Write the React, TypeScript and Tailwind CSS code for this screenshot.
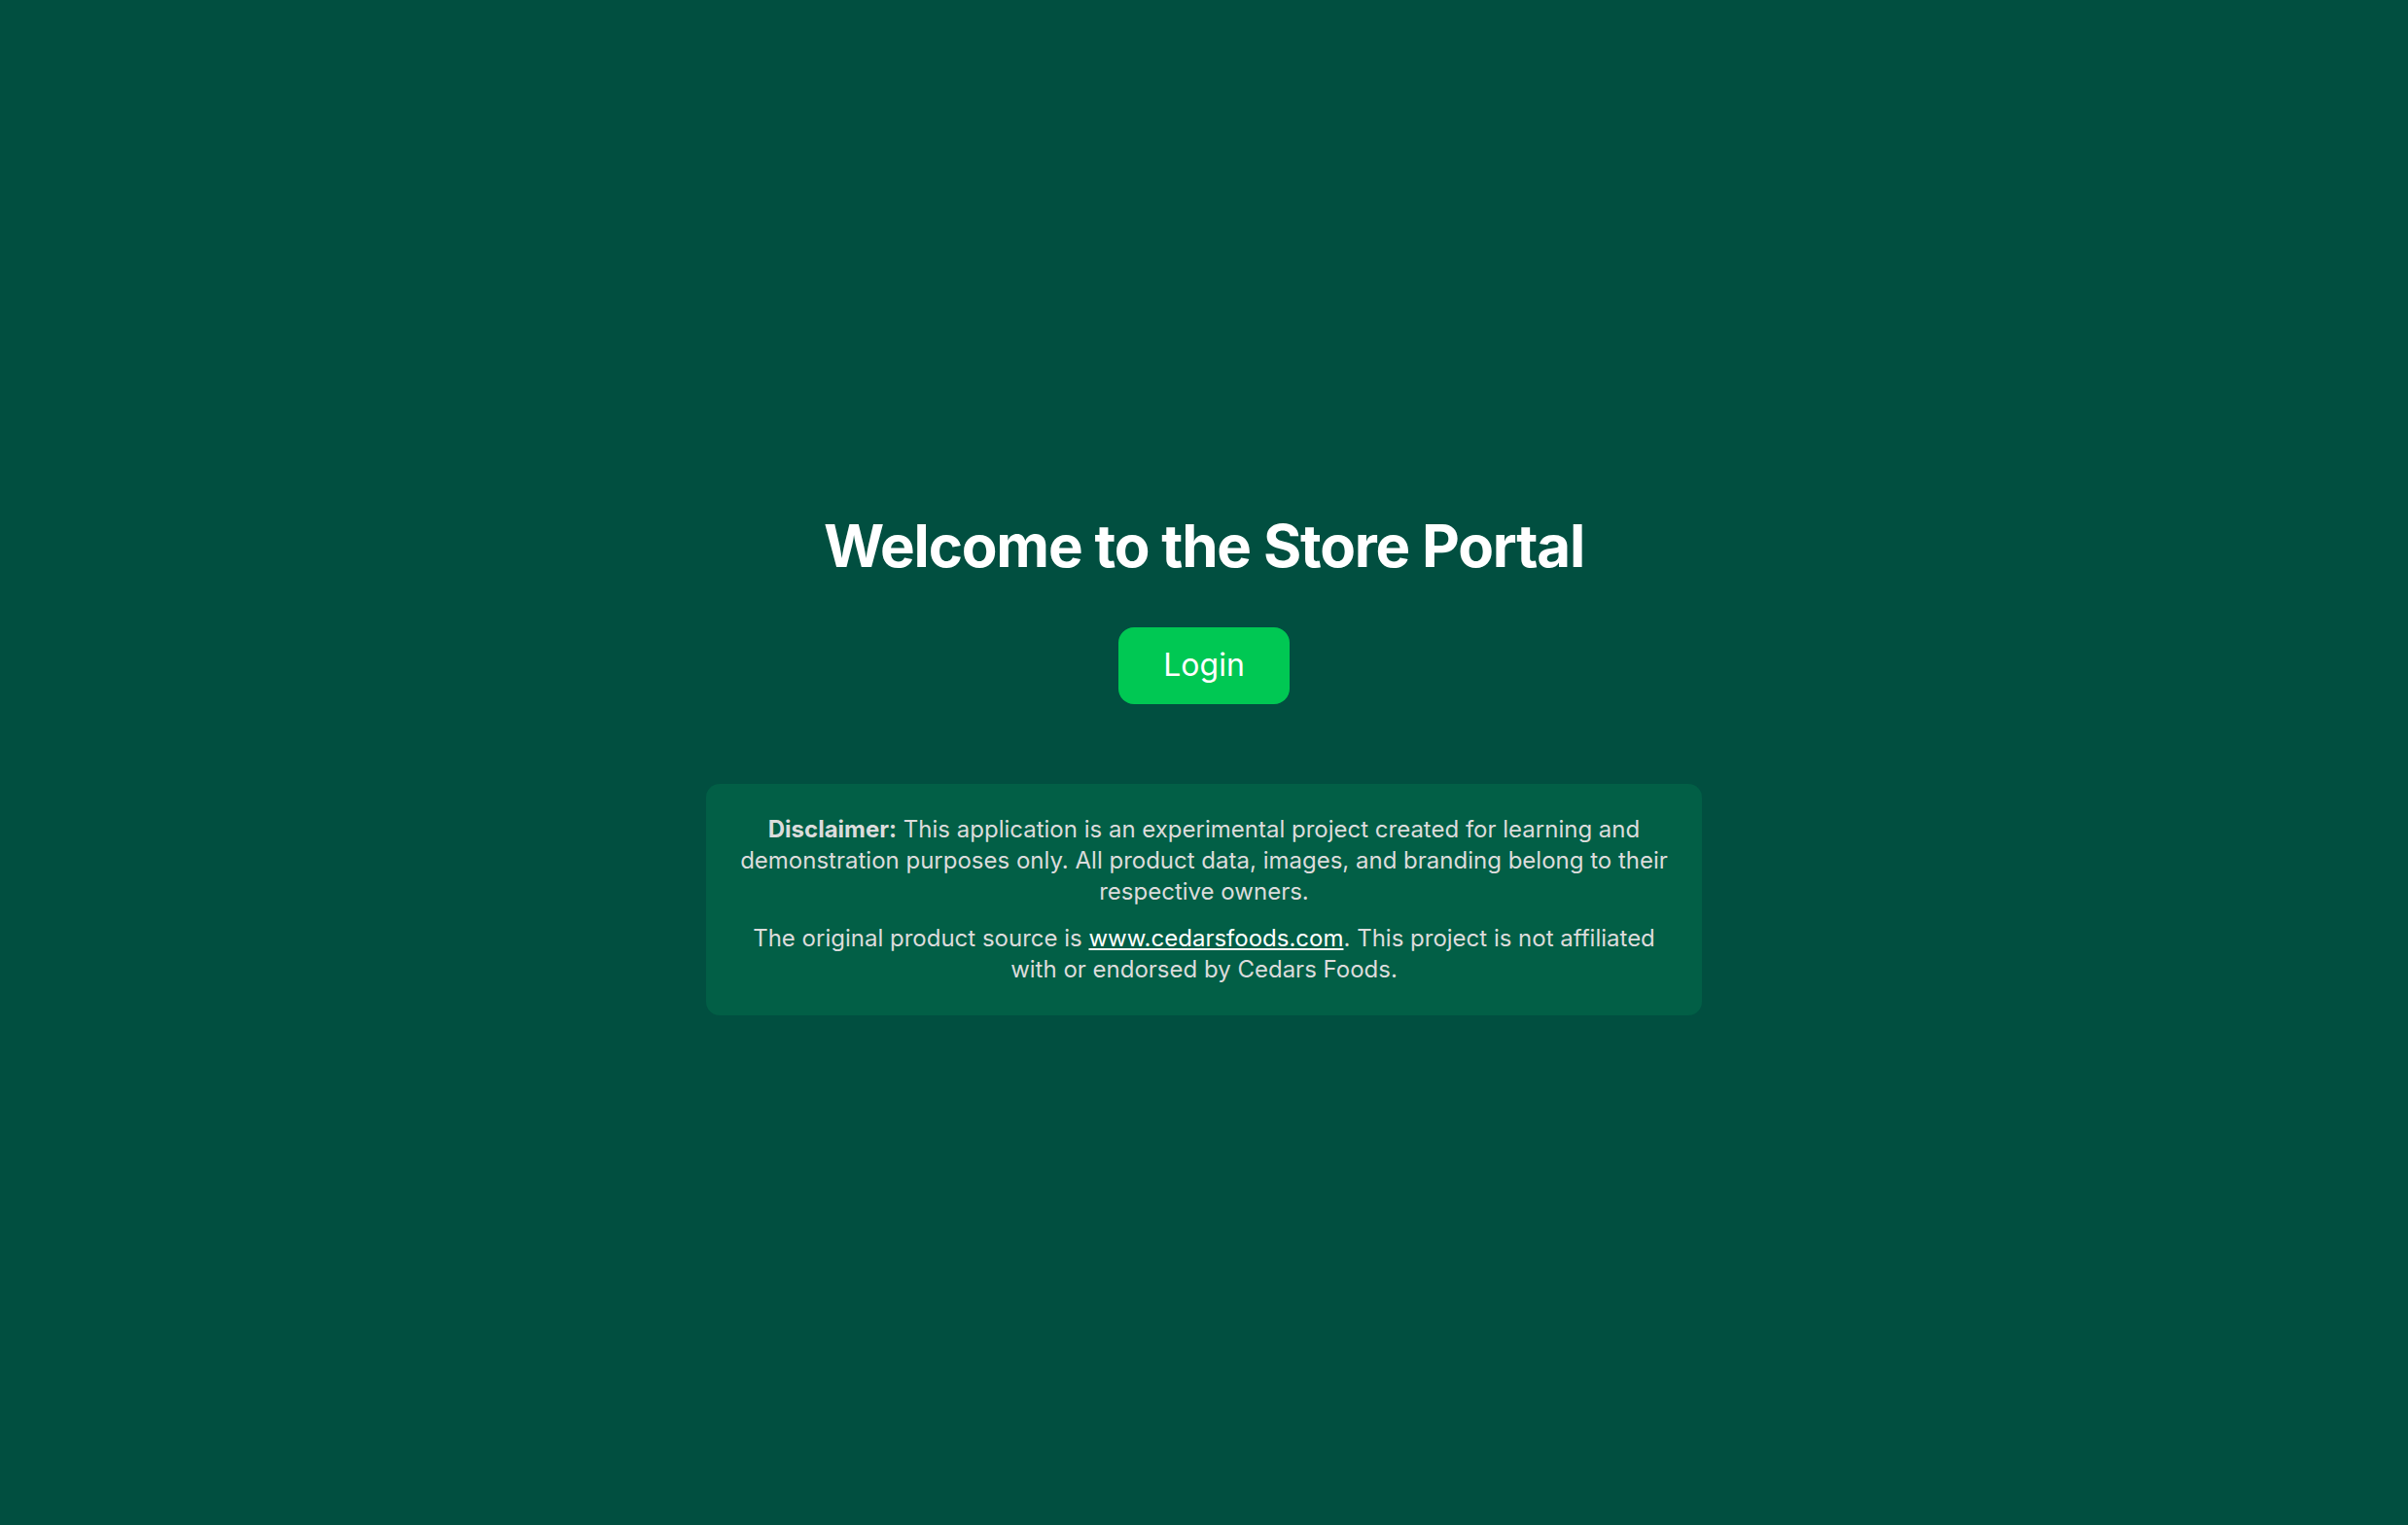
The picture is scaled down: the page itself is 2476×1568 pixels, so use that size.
import React from "react";

export default function App() {
  return (
    <main
      className="min-h-screen w-full flex flex-col items-center justify-center bg-[#014f40] text-white"
      style={{ fontFamily: "Inter, 'Noto Sans', sans-serif" }}
    >
      <h1 className="text-[60px] leading-[73px] font-bold tracking-[-1.2px]">
        Welcome to the Store Portal
      </h1>

      <button className="mt-[47px] h-[79px] px-[46px] rounded-[16px] bg-[#00c853] text-white text-[32px] leading-none">
        Login
      </button>

      <div className="mt-[82px] w-[1024px] rounded-[14px] bg-[#025f46] px-[28px] py-[31px] text-center text-[24px] leading-[32px] text-[#dcdcdc]">
        <p>
          <strong className="font-bold">Disclaimer:</strong> This application
          is an experimental project created for learning and demonstration
          purposes only. All product data, images, and branding belong to their
          respective owners.
        </p>
        <p className="mt-[16px]">
          The original product source is{" "}
          <a href="#" className="underline text-white">
            www.cedarsfoods.com
          </a>
          . This project is not affiliated with or endorsed by Cedars Foods.
        </p>
      </div>
    </main>
  );
}
